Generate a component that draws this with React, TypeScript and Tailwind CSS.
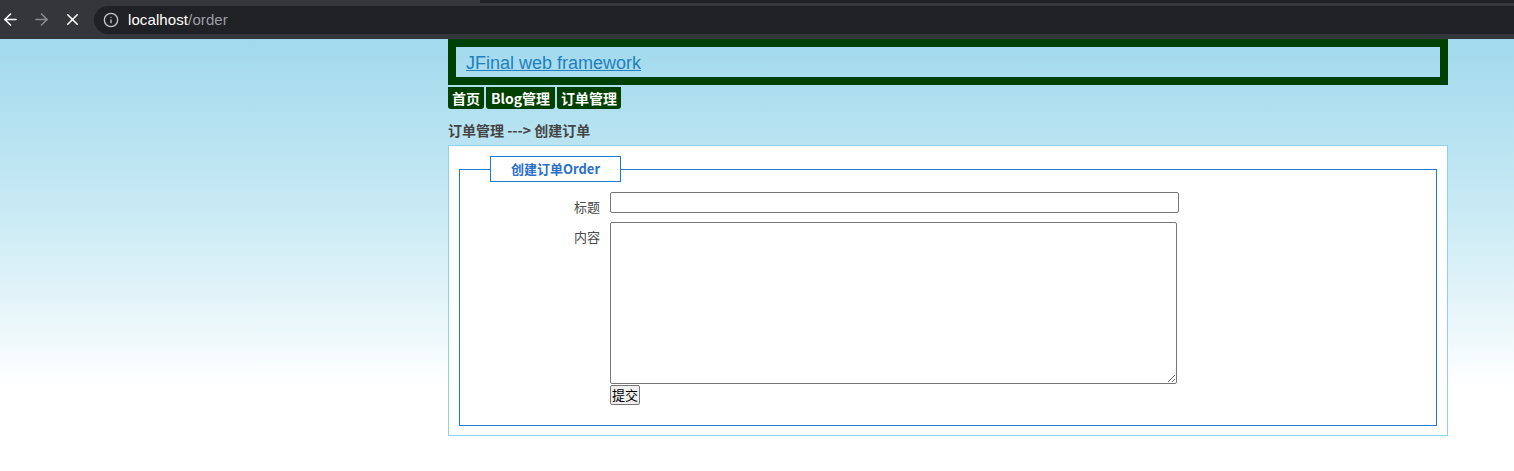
import { ArrowLeft, ArrowRight, X, Info } from "lucide-react";

const cjk = "font-['Noto_Sans_CJK_SC','Microsoft_YaHei',sans-serif]";

function BrowserBar() {
  return (
    <div className="h-[39px] bg-[#35363a] relative flex items-center">
      <div className="absolute left-[480px] top-0 h-[3px] right-0 bg-[#202124]" />
      <div className="flex items-center gap-[12px] text-white">
        <ArrowLeft size={19} strokeWidth={2} className="ml-[1px]" />
        <ArrowRight size={19} strokeWidth={2} className="text-[#8a8b8d]" />
        <X size={19} strokeWidth={2} />
      </div>
      <div className="ml-[12px] mt-[1px] h-[28px] flex-1 rounded-l-full bg-[#202124] flex items-center pl-[9px]">
        <Info size={16} strokeWidth={2} className="text-[#c5c7ca]" />
        <span className="ml-[9px] text-[15px] font-['Liberation_Sans',sans-serif] tracking-[0.1px]">
          <span className="text-white">localhost</span>
          <span className="text-[#9aa0a6]">/order</span>
        </span>
      </div>
    </div>
  );
}

const tabs = [
  { label: "首页", w: "w-[36px]" },
  { label: "Blog管理", w: "w-[69px]" },
  { label: "订单管理", w: "w-[64px]" },
];

export default function App() {
  return (
    <div className="h-[471px] w-[1514px] overflow-hidden flex flex-col bg-white">
      <BrowserBar />
      <div className="flex-1 bg-[linear-gradient(to_bottom,#a1d9ed_0px,#cbebf5_180px,#ffffff_350px)]">
        <div className="ml-[448px] w-[1000px]">
          <div className="border-[8px] border-[#004000] h-[46px] flex items-center pl-[10px]">
            <a
              href="#"
              className="text-[18px] text-[#2080bd] underline font-['Liberation_Sans',Arial,sans-serif] leading-none mt-[1px]"
            >
              JFinal web framework
            </a>
          </div>
          <div className={`flex gap-[2px] mt-[2px] ${cjk}`}>
            {tabs.map((t) => (
              <div
                key={t.label}
                className={`${t.w} h-[22px] text-center bg-[#004000] text-white font-bold text-[14px] leading-[22px] rounded-b-[3px]`}
              >
                {t.label}
              </div>
            ))}
          </div>
          <div className={`mt-[11px] h-[20px] text-[14px] font-bold text-[#444] leading-[20px] ${cjk}`}>
            订单管理 ---&gt; 创建订单
          </div>
          <div className="mt-[5px] bg-white border border-[#8fd3ef] h-[291px] px-[10px] pt-[10px]">
            <fieldset className="border border-[#1e7bd0] h-[270px] m-0 p-0">
              <legend
                className={`ml-[30px] w-[131px] h-[26px] border border-[#1e7bd0] text-[13px] font-bold text-[#2a6fc9] leading-[24px] ${cjk}`}
              >
                <div className="flex justify-center">创建订单Order</div>
              </legend>
              <div className={`mt-[10px] text-[13px] text-[#4a4a4a] ${cjk}`}>
                <div className="flex items-start">
                  <label className="w-[140px] text-right leading-[20px] mt-[5px]">标题</label>
                  <input
                    type="text"
                    className="ml-[10px] w-[569px] h-[21px] border border-[#767676] rounded-[2px] bg-white"
                  />
                </div>
                <div className="flex items-start mt-[5px]">
                  <label className="w-[140px] text-right leading-[20px] mt-[5px]">内容</label>
                  <div className="ml-[10px] flex flex-col items-start">
                    <textarea className="block w-[567px] h-[162px] border border-[#767676] rounded-[2px] bg-white resize-y" />
                    <button className="mt-[1px] h-[20px] px-[1px] border border-[#767676] rounded-[2px] bg-[#efefef] text-[13px] leading-[18px] text-black">
                      提交
                    </button>
                  </div>
                </div>
              </div>
            </fieldset>
          </div>
        </div>
      </div>
    </div>
  );
}
